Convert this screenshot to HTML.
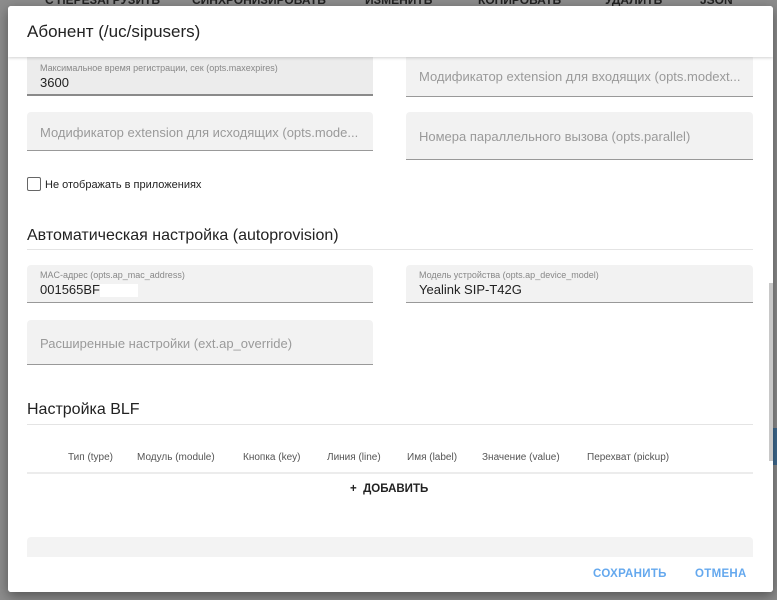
<!DOCTYPE html>
<html><head><meta charset="utf-8"><style>
*{box-sizing:border-box;margin:0;padding:0}
body{width:777px;height:600px;overflow:hidden;background:#8c8c8c;font-family:"Liberation Sans",sans-serif;position:relative}
.top{position:absolute;top:-7px;left:0;width:777px;font-size:12px;font-weight:bold;color:#222;white-space:nowrap}
.top span{position:absolute}
.dlg{position:absolute;left:8px;top:6px;width:765px;height:586px;background:#fff;border-radius:3px;overflow:hidden;box-shadow:0 4px 12px rgba(0,0,0,.4)}
.hdr{position:absolute;left:0;top:0;width:100%;height:51px;background:#fff;z-index:2;box-shadow:0 1px 3px rgba(0,0,0,.18)}
.hdr h1{position:absolute;left:19px;top:16px;font-size:17px;font-weight:normal;color:#222}
.a{position:absolute}
.f{position:absolute;background:#f2f2f2;border-bottom:1px solid #999;border-radius:4px 4px 0 0}
.lbl{position:absolute;left:13px;top:5px;font-size:9px;color:#888}
.val{position:absolute;left:13px;top:17px;font-size:13px;color:#222}
.ph{position:absolute;left:13px;font-size:13px;color:#9a9a9a;white-space:nowrap}
.h2{position:absolute;left:19px;font-size:16px;color:#222}
.ln{position:absolute;left:19px;width:726px;height:1px;background:#e4e4e4}
.th{position:absolute;top:446px;font-size:10px;color:#555}
.btn{position:absolute;top:562px;font-size:11.5px;font-weight:bold;color:#64a8ee;letter-spacing:.3px}
</style></head><body>
<div class="top"><span style="left:45px">C ПЕРЕЗАГРУЗИТЬ</span><span style="left:192px">СИНХРОНИЗИРОВАТЬ</span><span style="left:365px">ИЗМЕНИТЬ</span><span style="left:478px">КОПИРОВАТЬ</span><span style="left:605px">УДАЛИТЬ</span><span style="left:700px">JSON</span></div>
<div class="a" style="left:767px;top:428px;width:10px;height:37px;background:#3f6b91"></div>
<div class="dlg">
<div class="hdr"><h1>Абонент (/uc/sipusers)</h1></div>
<div class="f" style="left:19px;top:48px;width:346px;height:42px;background:#ececec;border-bottom:2px solid #8a8a8a"><div class="lbl" style="top:9px">Максимальное время регистрации, сек (opts.maxexpires)</div><div class="val" style="top:21px">3600</div></div>
<div class="f" style="left:398px;top:48px;width:347px;height:43px"><div class="ph" style="top:15px">Модификатор extension для входящих (opts.modext...</div></div>
<div class="f" style="left:19px;top:106px;width:346px;height:39px"><div class="ph" style="top:13px">Модификатор extension для исходящих (opts.mode...</div></div>
<div class="f" style="left:398px;top:106px;width:347px;height:48px"><div class="ph" style="top:17px">Номера параллельного вызова (opts.parallel)</div></div>
<div class="a" style="left:19px;top:171px;width:14px;height:14px;border:1.5px solid #666;border-radius:2px"></div>
<div class="a" style="left:37px;top:173px;font-size:11px;color:#222">Не отображать в приложениях</div>
<div class="h2" style="top:221px">Автоматическая настройка (autoprovision)</div>
<div class="ln" style="top:243px"></div>
<div class="f" style="left:19px;top:259px;width:346px;height:38px"><div class="lbl">MAC-адрес (opts.ap_mac_address)</div><div class="val">001565BF<span style="display:inline-block;width:38px;height:13px;background:#fff;vertical-align:middle"></span></div></div>
<div class="f" style="left:398px;top:259px;width:347px;height:38px"><div class="lbl">Модель устройства (opts.ap_device_model)</div><div class="val">Yealink SIP-T42G</div></div>
<div class="f" style="left:19px;top:314px;width:346px;height:45px"><div class="ph" style="top:16px">Расширенные настройки (ext.ap_override)</div></div>
<div class="h2" style="top:395px">Настройка BLF</div>
<div class="ln" style="top:418px"></div>
<div class="th" style="left:60px">Тип (type)</div>
<div class="th" style="left:129px">Модуль (module)</div>
<div class="th" style="left:235px">Кнопка (key)</div>
<div class="th" style="left:319px">Линия (line)</div>
<div class="th" style="left:399px">Имя (label)</div>
<div class="th" style="left:474px">Значение (value)</div>
<div class="th" style="left:579px">Перехват (pickup)</div>
<div class="ln" style="top:466px;background:#ececec;height:1.5px"></div>
<div class="a" style="left:342px;top:477px;font-size:11.5px;font-weight:bold;color:#222">+&nbsp; ДОБАВИТЬ</div>
<div class="a" style="left:19px;top:531px;width:726px;height:20px;background:#f3f3f3;border-radius:4px 4px 0 0"></div>
<div class="a" style="left:0;top:551px;width:100%;height:40px;background:#fff"></div>
<div class="btn" style="left:585px">СОХРАНИТЬ</div>
<div class="btn" style="left:687px">ОТМЕНА</div>
<div class="a" style="left:761px;top:277px;width:4px;height:178px;background:#c8c8c8"></div>
</div>
</body></html>
